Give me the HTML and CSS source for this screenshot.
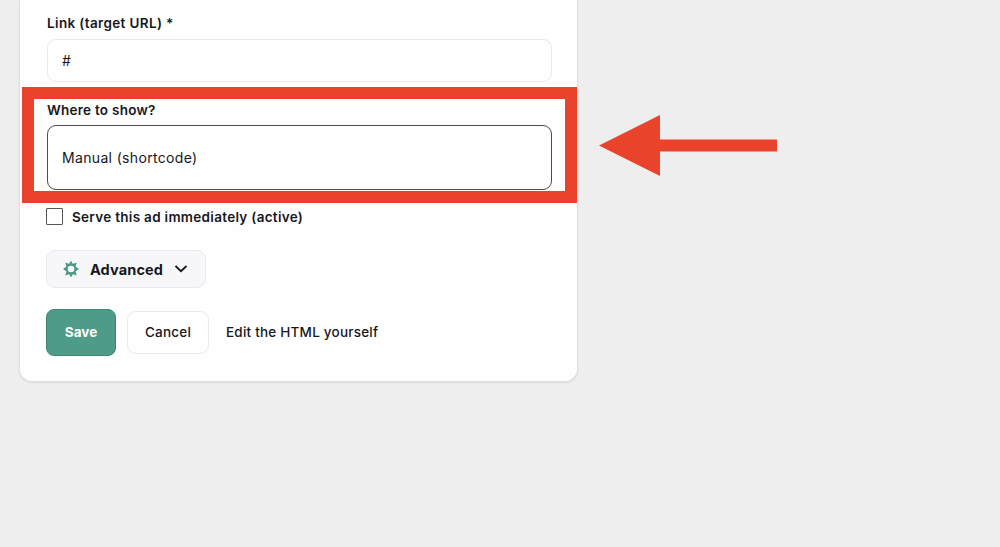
FILE: index.html
```html
<!DOCTYPE html>
<html lang="en">
<head>
    <meta charset="UTF-8">
    <meta name="viewport" content="width=device-width, initial-scale=1.0">
    <title>Edit ad</title>
    <link rel="stylesheet" href="styles.css">
</head>
<body>

<form class="card">
    <label class="field-label link-label" for="link">Link (target URL) *</label>
    <input class="field-input" type="text" id="link" value="#">

    <label class="field-label" for="placement">Where to show?</label>
    <select class="field-select" id="placement">
        <option>Manual (shortcode)</option>
    </select>

    <label class="check-row">
        <input class="check" type="checkbox">
        <span>Serve this ad immediately (active)</span>
    </label>

    <button class="advanced" type="button">
        <svg width="18" height="18" viewBox="0 0 18 18">
            <path fill="#4a9a86" fill-rule="evenodd" d="M9 .6l1.6 3 .6.2 3.6-1.2-1.2 3.6.2.6 3.2 2.2-3.2 2.2-.2.6 1.2 3.6-3.6-1.2-.6.2L9 17.4l-1.6-3-.6-.2-3.6 1.2 1.2-3.6-.2-.6L1 9l3.2-2.2.2-.6-1.2-3.6 3.6 1.2.6-.2zM9 5.7a3.3 3.3 0 1 0 0 6.6 3.3 3.3 0 0 0 0-6.6z"/>
        </svg>
        <span>Advanced</span>
        <svg width="14" height="10" viewBox="0 0 14 10">
            <path d="M1.5 2l5.5 5.2L12.5 2" fill="none" stroke="#16181d" stroke-width="1.8"/>
        </svg>
    </button>

    <div class="actions">
        <button class="btn-save" type="button">Save</button>
        <button class="btn-cancel" type="button">Cancel</button>
        <a class="edit-link">Edit the HTML yourself</a>
    </div>
</form>

<!-- Highlight around the placement field -->
<div class="highlight"></div>
<svg class="arrow" width="180" height="62" viewBox="0 0 180 62">
    <path d="M1 30.5L62 0V24.5H179V36.5H62V61Z" fill="#ea432c"/>
</svg>

</body>
</html>
```

FILE: styles.css
```css
* {
    box-sizing: border-box;
}
body {
    font-family: Inter, "Liberation Sans", sans-serif;
    font-size: 14px;
    margin: 0;
    height: 547px;
    background-color: #eeeeef;
    color: #16181d;
    overflow: hidden;
}
button, input, select {
    font-family: inherit;
    color: inherit;
    margin: 0;
}

/* Form card */
.card {
    display: flex;
    flex-direction: column;
    align-items: flex-start;
    width: 559px;
    height: 382px;
    margin-left: 19px;
    padding: 13px 26px 0;
    background: #fefefe;
    border: 1px solid #e0e0e2;
    border-top: none;
    border-radius: 0 0 13px 13px;
    box-shadow: 0 1px 2px rgba(0, 0, 0, 0.08);
}
.field-label {
    height: 20px;
    line-height: 20px;
    margin-left: 1px;
    font-size: 13.5px;
    font-weight: 600;
    letter-spacing: 0.25px;
}
.link-label {
    letter-spacing: 0.36px;
}
.field-input {
    width: 505px;
    height: 43px;
    margin: 6px 0 18px 1px;
    padding: 0 14px;
    font-size: 14px;
    background: #fefefe;
    border: 1px solid #e9e9ec;
    border-radius: 9px;
}
.field-select {
    appearance: none;
    width: 505px;
    height: 65px;
    margin: 5px 0 0 1px;
    padding: 0 14px;
    font-size: 14px;
    letter-spacing: 0.34px;
    background: #fefefe;
    border: 1px solid #4c4c4c;
    border-radius: 9px;
}
.check-row {
    display: flex;
    align-items: center;
    gap: 8px;
    height: 18px;
    margin-top: 17px;
    font-size: 13.5px;
    font-weight: 600;
    letter-spacing: 0.3px;
}
.check-row span {
    padding: 2px 0 0 1px;
}
.check {
    appearance: none;
    width: 17px;
    height: 17px;
    margin: 0;
    background: #fefefe;
    border: 1px solid #55575b;
    border-radius: 1px;
}

/* Buttons */
.advanced {
    display: flex;
    align-items: center;
    width: 160px;
    height: 38px;
    margin-top: 25px;
    padding: 0 15px;
    font-size: 14.5px;
    font-weight: 700;
    background: #f7f7fa;
    border: 1px solid #e9eaed;
    border-radius: 9px;
}
.advanced span {
    width: 74px;
    margin: 0 11px 0 9px;
    padding-left: 1px;
    text-align: left;
    letter-spacing: 0.12px;
}
.actions {
    display: flex;
    align-items: center;
    height: 48px;
    margin-top: 20px;
}
.btn-save {
    width: 70px;
    height: 47px;
    font-size: 13.5px;
    font-weight: 700;
    color: white;
    background: #4d9b88;
    border: 1px solid #3b8975;
    border-radius: 8px;
}
.btn-cancel {
    width: 82px;
    height: 43px;
    margin: 0 17px 0 11px;
    padding: 0;
    font-size: 13.5px;
    font-weight: 500;
    letter-spacing: 0.2px;
    background: #fefefe;
    border: 1px solid #e9e9ec;
    border-radius: 9px;
}
.edit-link {
    font-size: 13.5px;
    font-weight: 500;
    letter-spacing: 0.22px;
    line-height: 16px;
    padding-bottom: 1px;
}

/* Annotations over the form */
.highlight {
    position: absolute;
    left: 22px;
    top: 87px;
    width: 555px;
    height: 116px;
    border: 12px solid #ea432c;
}
.arrow {
    position: absolute;
    left: 598px;
    top: 115px;
}
```
